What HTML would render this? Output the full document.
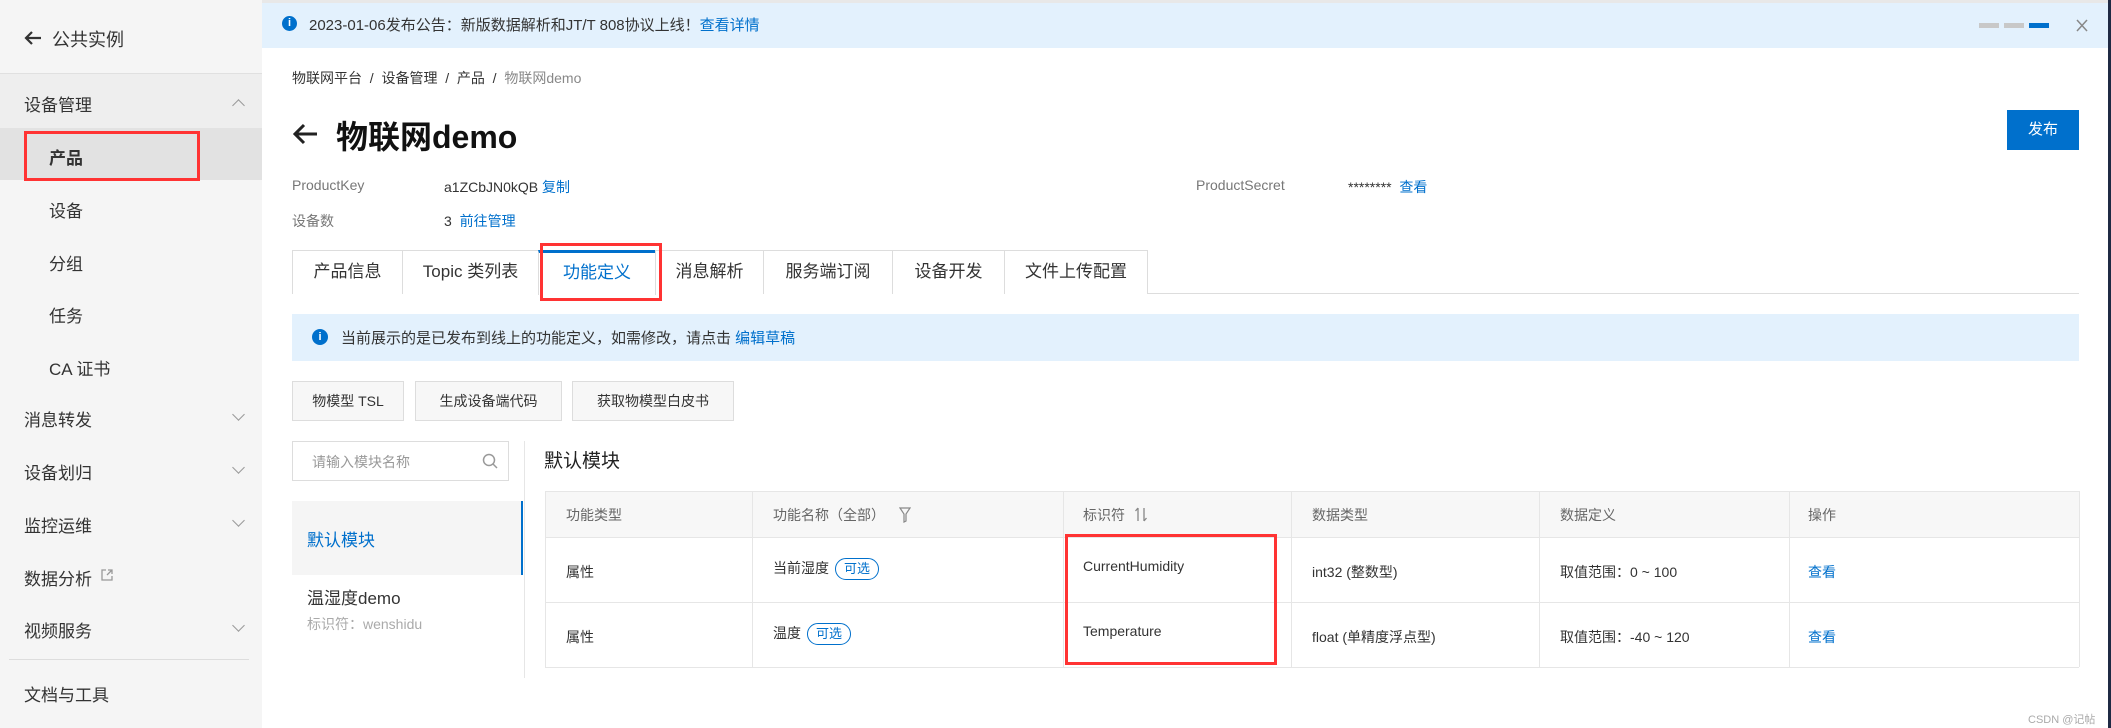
<!DOCTYPE html>
<html><head><meta charset="utf-8"><style>
*{margin:0;padding:0;box-sizing:border-box}
body{width:2111px;height:728px;overflow:hidden;background:#fff;font-family:"Liberation Sans","Noto Sans CJK SC",sans-serif;color:#333;position:relative}
.a{position:absolute;white-space:nowrap}
.sb{position:absolute;left:0;top:0;width:262px;height:728px;background:#f5f5f5}
.si{position:absolute;left:24px;font-size:17px;color:#333}
.sub{left:49px}
.chev{position:absolute;left:234px;width:9px;height:9px;border-right:1.5px solid #999;border-bottom:1.5px solid #999;transform:rotate(45deg)}
.blue{color:#0070cc}
.tab{position:absolute;top:250px;height:44px;border:1px solid #ddd;border-bottom:none;font-size:17px;line-height:42px;text-align:center;background:#fff}
.btn{position:absolute;top:381px;height:40px;border:1px solid #ddd;background:#f7f7f7;font-size:14px;line-height:38px;text-align:center}
.th,.td{position:absolute;font-size:14px}
.th{color:#666}
.vl{position:absolute;width:1px;background:#e6e6e6;top:491px;height:176px}
.hl{position:absolute;height:1px;background:#e6e6e6;left:545px;width:1534px}
.tag{display:inline-block;border:1px solid #0070cc;color:#0070cc;border-radius:12px;padding:0 8px;font-size:13px;line-height:20px;margin-left:6px}
.rb{position:absolute;border:3px solid #f33}
</style></head><body>
<div class="a" style="left:0;top:0;width:2111px;height:3px;background:#e8e8e8"></div>
<div class="a" style="left:0;top:0;width:62px;height:3px;background:#ff6a00"></div>
<div class="sb">
 <svg class="a" style="left:24px;top:30px" width="18" height="16" viewBox="0 0 18 16"><path d="M17 8H2M8 2L2 8l6 6" fill="none" stroke="#333" stroke-width="2.2"/></svg>
 <div class="a" style="left:52px;top:26px;font-size:18px">公共实例</div>
 <div class="a" style="left:0;top:73px;width:262px;height:1px;background:#e0e0e0"></div>
 <div class="a" style="left:0;top:74px;width:262px;height:54px;background:#eeeeee"></div>
 <div class="si" style="top:91px">设备管理</div>
 <div class="chev" style="top:101px;transform:rotate(225deg)"></div>
 <div class="a" style="left:0;top:128px;width:262px;height:52px;background:#e2e2e2"></div>
 <div class="si sub" style="top:144px;font-weight:bold">产品</div>
 <div class="si sub" style="top:197px">设备</div>
 <div class="si sub" style="top:250px">分组</div>
 <div class="si sub" style="top:302px">任务</div>
 <div class="si sub" style="top:355px">CA 证书</div>
 <div class="si" style="top:406px">消息转发</div><div class="chev" style="top:410px"></div>
 <div class="si" style="top:459px">设备划归</div><div class="chev" style="top:463px"></div>
 <div class="si" style="top:512px">监控运维</div><div class="chev" style="top:516px"></div>
 <div class="si" style="top:565px">数据分析</div>
 <svg class="a" style="left:101px;top:569px" width="12" height="12" viewBox="0 0 12 12"><path d="M5 1H1v10h10V7M7 1h4v4M11 1L6 6" fill="none" stroke="#999" stroke-width="1.3"/></svg>
 <div class="si" style="top:617px">视频服务</div><div class="chev" style="top:621px"></div>
 <div class="a" style="left:9px;top:659px;width:240px;height:1px;background:#ddd"></div>
 <div class="si" style="top:681px">文档与工具</div>
</div>
<div class="rb" style="left:24px;top:131px;width:176px;height:50px"></div>

<div class="a" style="left:262px;top:3px;width:1846px;height:45px;background:#e3f1fd"></div>
<div class="a" style="left:2108px;top:0;width:3px;height:728px;background:#1f2a44"></div>
<div class="a" style="left:282px;top:16px;width:15px;height:15px;border-radius:50%;background:#0070cc;color:#fff;font-size:11px;line-height:15px;text-align:center;font-weight:bold">i</div>
<div class="a" style="left:309px;top:14px;font-size:15px">2023-01-06发布公告：新版数据解析和JT/T 808协议上线！<span class="blue">查看详情</span></div>
<div class="a" style="left:1979px;top:23px;width:20px;height:5px;background:#c8c8c8"></div>
<div class="a" style="left:2004px;top:23px;width:20px;height:5px;background:#c8c8c8"></div>
<div class="a" style="left:2029px;top:23px;width:20px;height:5px;background:#0070cc"></div>
<svg class="a" style="left:2076px;top:19px" width="12" height="13" viewBox="0 0 12 13"><path d="M1 1l10 11M11 1L1 12" stroke="#888" stroke-width="1.5"/></svg>

<div class="a" style="left:292px;top:68px;font-size:14px;color:#333">物联网平台 &nbsp;/&nbsp; 设备管理 &nbsp;/&nbsp; 产品 &nbsp;/&nbsp; <span style="color:#888">物联网demo</span></div>
<svg class="a" style="left:292px;top:123px" width="26" height="22" viewBox="0 0 26 22"><path d="M25 11H3M12 2L3 11l9 9" fill="none" stroke="#222" stroke-width="3"/></svg>
<div class="a" style="left:336px;top:112px;font-size:32px;font-weight:bold;color:#111">物联网demo</div>
<div class="a" style="left:2007px;top:110px;width:72px;height:40px;background:#0070cc;color:#fff;font-size:15px;line-height:40px;text-align:center">发布</div>
<div class="a" style="left:292px;top:177px;font-size:14px;color:#777">ProductKey</div>
<div class="a" style="left:444px;top:177px;font-size:14px">a1ZCbJN0kQB <span class="blue">复制</span></div>
<div class="a" style="left:1196px;top:177px;font-size:14px;color:#777">ProductSecret</div>
<div class="a" style="left:1348px;top:177px;font-size:14px">******** <span class="blue">&nbsp;查看</span></div>
<div class="a" style="left:292px;top:211px;font-size:14px;color:#777">设备数</div>
<div class="a" style="left:444px;top:211px;font-size:14px">3 &nbsp;<span class="blue">前往管理</span></div>

<div class="a" style="left:292px;top:293px;width:1787px;height:1px;background:#ddd"></div>
<div class="tab" style="left:292px;width:111px">产品信息</div>
<div class="tab" style="left:402px;width:137px">Topic 类列表</div>
<div class="tab" style="left:538px;width:118px;border-top:3px solid #0070cc;color:#0070cc;height:45px;line-height:40px">功能定义</div>
<div class="tab" style="left:655px;width:109px">消息解析</div>
<div class="tab" style="left:763px;width:130px">服务端订阅</div>
<div class="tab" style="left:892px;width:113px">设备开发</div>
<div class="tab" style="left:1004px;width:144px">文件上传配置</div>
<div class="rb" style="left:540px;top:243px;width:122px;height:58px"></div>

<div class="a" style="left:292px;top:314px;width:1787px;height:47px;background:#e3f1fd"></div>
<div class="a" style="left:312px;top:329px;width:16px;height:16px;border-radius:50%;background:#0070cc;color:#fff;font-size:11px;line-height:16px;text-align:center;font-weight:bold">i</div>
<div class="a" style="left:341px;top:327px;font-size:15px">当前展示的是已发布到线上的功能定义，如需修改，请点击 <span class="blue">编辑草稿</span></div>

<div class="btn" style="left:292px;width:112px">物模型 TSL</div>
<div class="btn" style="left:415px;width:147px">生成设备端代码</div>
<div class="btn" style="left:572px;width:162px">获取物模型白皮书</div>

<div class="a" style="left:292px;top:441px;width:217px;height:40px;border:1px solid #ddd"></div>
<div class="a" style="left:312px;top:452px;font-size:14px;color:#999">请输入模块名称</div>
<svg class="a" style="left:482px;top:453px" width="16" height="16" viewBox="0 0 16 16"><circle cx="7" cy="7" r="5.5" fill="none" stroke="#999" stroke-width="1.5"/><path d="M11 11l4 4" stroke="#999" stroke-width="1.5"/></svg>
<div class="a" style="left:524px;top:441px;width:1px;height:237px;background:#e6e6e6"></div>
<div class="a" style="left:292px;top:501px;width:231px;height:74px;background:#f5f5f5;border-right:2px solid #0070cc"></div>
<div class="a" style="left:307px;top:526px;font-size:17px;color:#0070cc">默认模块</div>
<div class="a" style="left:307px;top:584px;font-size:17px">温湿度demo</div>
<div class="a" style="left:307px;top:614px;font-size:14px;color:#aaa">标识符：wenshidu</div>

<div class="a" style="left:544px;top:446px;font-size:19px;color:#222">默认模块</div>
<div class="a" style="left:545px;top:491px;width:1534px;height:46px;background:#f7f7f7"></div>
<div class="hl" style="top:491px"></div><div class="hl" style="top:537px"></div><div class="hl" style="top:602px"></div><div class="hl" style="top:667px"></div>
<div class="vl" style="left:545px"></div><div class="vl" style="left:752px"></div><div class="vl" style="left:1063px"></div><div class="vl" style="left:1291px"></div><div class="vl" style="left:1539px"></div><div class="vl" style="left:1789px"></div><div class="vl" style="left:2079px"></div>
<div class="th" style="left:566px;top:505px">功能类型</div>
<div class="th" style="left:773px;top:505px">功能名称（全部）</div>
<svg class="a" style="left:899px;top:507px" width="12" height="16" viewBox="0 0 12 16"><path d="M1 1h10L7 7v7l-2 1V7z" fill="none" stroke="#888" stroke-width="1.2"/></svg>
<div class="th" style="left:1083px;top:505px">标识符</div>
<svg class="a" style="left:1135px;top:507px" width="12" height="15" viewBox="0 0 12 15"><path d="M3 1v13M3 1L0.5 4M9 14V1M9 14l2.5-3" fill="none" stroke="#888" stroke-width="1.3"/></svg>
<div class="th" style="left:1312px;top:505px">数据类型</div>
<div class="th" style="left:1560px;top:505px">数据定义</div>
<div class="th" style="left:1808px;top:505px">操作</div>
<div class="td" style="left:566px;top:562px">属性</div>
<div class="td" style="left:773px;top:558px">当前湿度<span class="tag">可选</span></div>
<div class="td" style="left:1083px;top:558px">CurrentHumidity</div>
<div class="td" style="left:1312px;top:562px">int32 (整数型)</div>
<div class="td" style="left:1560px;top:562px">取值范围：0 ~ 100</div>
<div class="td blue" style="left:1808px;top:562px">查看</div>
<div class="td" style="left:566px;top:627px">属性</div>
<div class="td" style="left:773px;top:623px">温度<span class="tag">可选</span></div>
<div class="td" style="left:1083px;top:623px">Temperature</div>
<div class="td" style="left:1312px;top:627px">float (单精度浮点型)</div>
<div class="td" style="left:1560px;top:627px">取值范围：-40 ~ 120</div>
<div class="td blue" style="left:1808px;top:627px">查看</div>
<div class="rb" style="left:1065px;top:534px;width:212px;height:131px"></div>
<div class="a" style="left:2028px;top:711px;font-size:11px;color:#aaa">CSDN @记帖</div>
</body></html>
